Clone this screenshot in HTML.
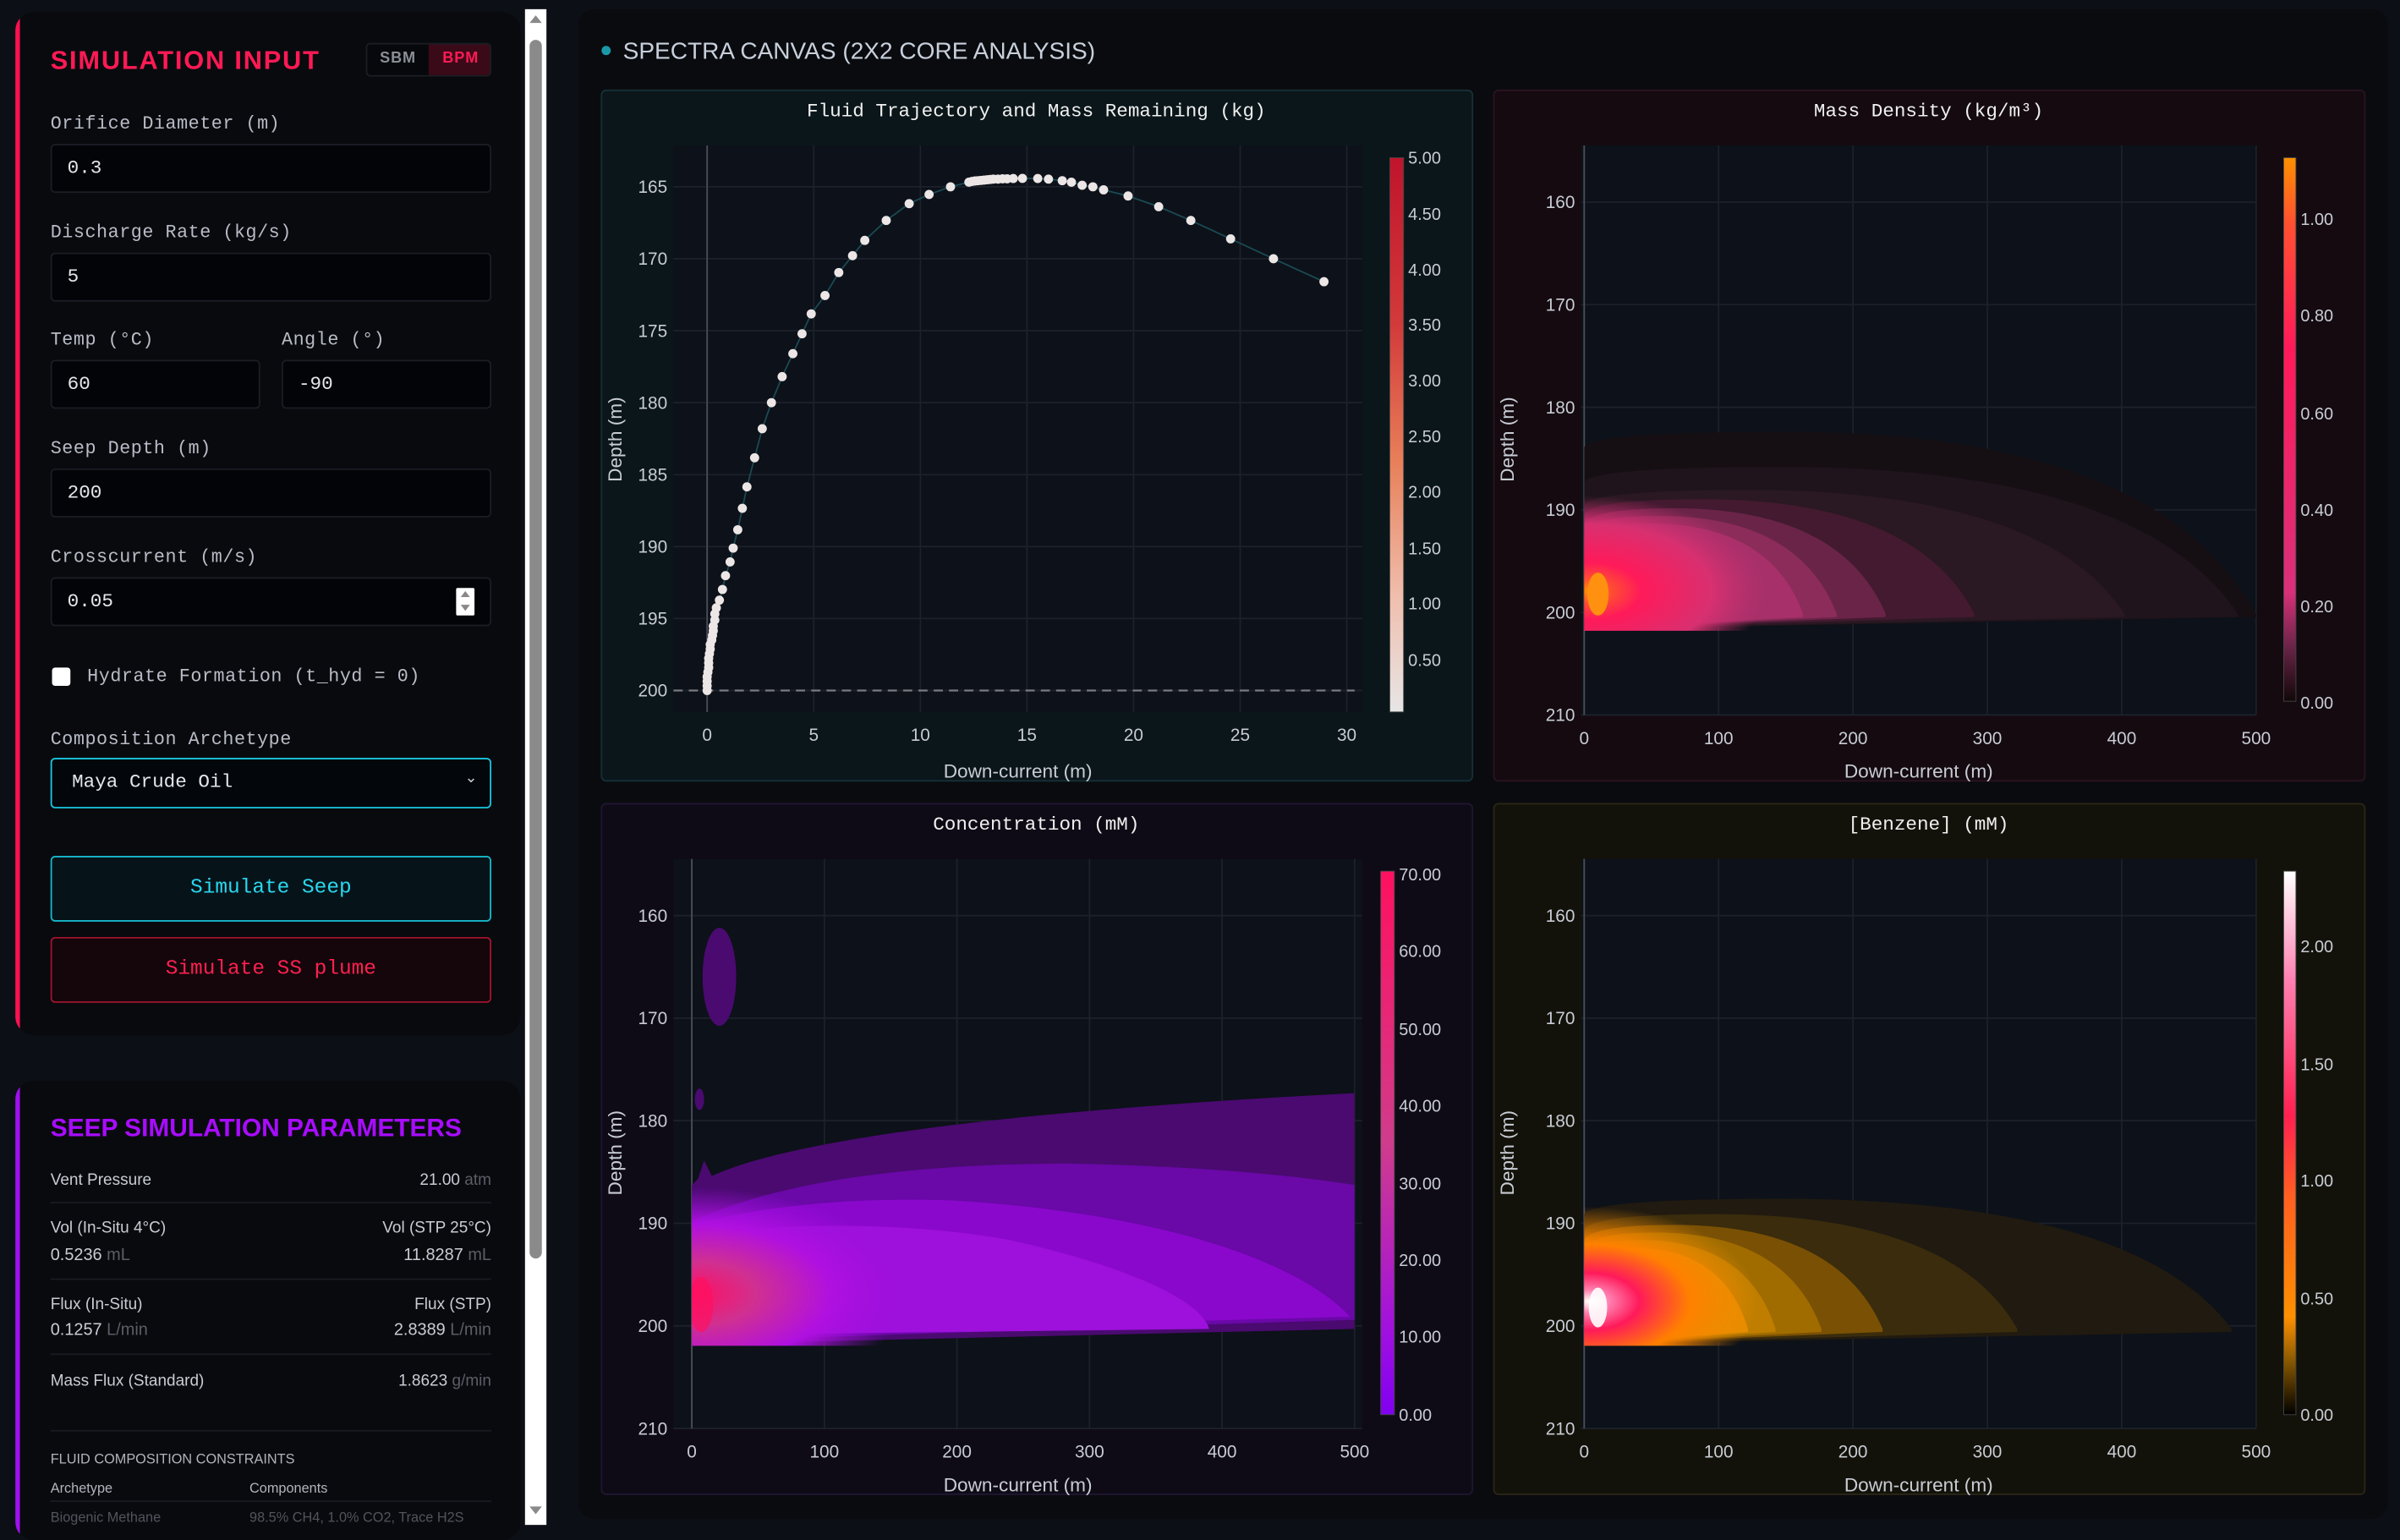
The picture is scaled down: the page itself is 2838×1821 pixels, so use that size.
<!DOCTYPE html>
<html><head><meta charset="utf-8">
<style>
*{box-sizing:border-box;margin:0;padding:0}
html,body{width:2838px;height:1814px;overflow:hidden;background:#0c0f16}
#w{position:absolute;left:0;top:0;width:1568px;height:1002px;transform:scale(1.80995,1.8104);transform-origin:0 0;background:#0c0f16;font-family:"Liberation Mono",monospace;color:#c8ccd4}
.card{position:absolute;background:#090a0e;border-radius:12px;overflow:hidden}
.card:before{content:"";position:absolute;left:0;top:0;bottom:0;width:3px;border-radius:12px 0 0 12px}
.c1:before{background:#ff1050}.c2:before{background:#a010f0}
.ab{position:absolute}
.lbl{position:absolute;left:23px;font-size:12px;color:#b8bcc6;letter-spacing:.3px}
.inp{position:absolute;left:23px;width:288px;height:32px;background:#030407;border:1px solid #1a1d24;border-radius:3px;font-size:12.5px;color:#e4e6ea;padding:8px 10px}
.row{position:absolute;left:23px;width:288px;font-size:10.5px;color:#c8ccd4}
.u{color:#5a5e66}
.hr{position:absolute;left:23px;width:288px;height:1px;background:#181b22}
</style></head><body>
<div id="w">
<div class="card c1" style="left:10px;top:8px;width:330px;height:668px">
  <div class="ab" style="left:23px;top:22px;font-family:'Liberation Sans',sans-serif;font-weight:bold;font-size:17px;color:#ff1a55;letter-spacing:1px">SIMULATION INPUT</div>
  <div class="ab" style="left:229px;top:20px;width:82px;height:22px;border:1px solid #1c1e24;border-radius:3px;overflow:hidden;font-family:'Liberation Sans',sans-serif;font-weight:bold;font-size:10px;letter-spacing:.5px">
    <div class="ab" style="left:0;top:0;width:40px;height:22px;background:#07080b;color:#8a8e96;text-align:center;line-height:20px">SBM</div>
    <div class="ab" style="left:40px;top:0;width:42px;height:22px;background:#3a0a18;color:#ff1a55;text-align:center;line-height:20px">BPM</div>
  </div>
  <div class="lbl" style="top:66px">Orifice Diameter (m)</div>
  <div class="inp" style="top:86px">0.3</div>
  <div class="lbl" style="top:137px">Discharge Rate (kg/s)</div>
  <div class="inp" style="top:157px">5</div>
  <div class="lbl" style="top:207px">Temp (°C)</div>
  <div class="lbl" style="top:207px;left:174px">Angle (°)</div>
  <div class="inp" style="top:227px;width:137px">60</div>
  <div class="inp" style="top:227px;left:174px;width:137px">-90</div>
  <div class="lbl" style="top:278px">Seep Depth (m)</div>
  <div class="inp" style="top:298px">200</div>
  <div class="lbl" style="top:349px">Crosscurrent (m/s)</div>
  <div class="inp" style="top:369px">0.05<div class="ab" style="left:264px;top:6px;width:12px;height:18px;background:#fff;border-radius:1px"><div class="ab" style="left:3px;top:2px;border:3px solid transparent;border-bottom:4px solid #888;border-top:0"></div><div class="ab" style="left:3px;top:11px;border:3px solid transparent;border-top:4px solid #888;border-bottom:0"></div></div></div>
  <div class="ab" style="left:24px;top:428px;width:12px;height:12px;background:#fff;border-radius:2px"></div>
  <div class="lbl" style="top:427px;left:47px">Hydrate Formation (t_hyd = 0)</div>
  <div class="lbl" style="top:468px">Composition Archetype</div>
  <div class="inp" style="top:487px;height:33px;border:1.5px solid #18c8e0;background:#03070c;padding:8px 13px">Maya Crude Oil<span class="ab" style="right:8px;top:7px;font-size:10px;color:#ccc">&#8964;</span></div>
  <div class="ab" style="left:23px;top:551px;width:288px;height:43px;border:1px solid #16b8cc;background:#06141a;border-radius:3px;color:#2ad8ee;font-size:13.5px;text-align:center;line-height:41px">Simulate Seep</div>
  <div class="ab" style="left:23px;top:604px;width:288px;height:43px;border:1px solid #a0142e;background:#14060b;border-radius:3px;color:#ff2050;font-size:13.5px;text-align:center;line-height:41px">Simulate SS plume</div>
</div>
<div class="card c2" style="left:10px;top:706px;width:330px;height:300px;font-family:'Liberation Sans',sans-serif">
  <div class="ab" style="left:23px;top:22px;font-weight:bold;font-size:16.5px;color:#a80cff">SEEP SIMULATION PARAMETERS</div>
  <div class="row" style="top:59px">Vent Pressure<span style="float:right">21.00 <span class="u">atm</span></span></div>
  <div class="hr" style="top:79px"></div>
  <div class="row" style="top:90px">Vol (In-Situ 4°C)<span style="float:right">Vol (STP 25°C)</span></div>
  <div class="row" style="top:108px;font-size:11px">0.5236 <span class="u">mL</span><span style="float:right">11.8287 <span class="u">mL</span></span></div>
  <div class="hr" style="top:129px"></div>
  <div class="row" style="top:140px">Flux (In-Situ)<span style="float:right">Flux (STP)</span></div>
  <div class="row" style="top:157px;font-size:11px">0.1257 <span class="u">L/min</span><span style="float:right">2.8389 <span class="u">L/min</span></span></div>
  <div class="hr" style="top:178px"></div>
  <div class="row" style="top:190px">Mass Flux (Standard)<span style="float:right">1.8623 <span class="u">g/min</span></span></div>
  <div class="hr" style="top:228px"></div>
  <div class="row" style="top:242px;font-size:9px;color:#b0b4bc">FLUID COMPOSITION CONSTRAINTS</div>
  <div class="row" style="top:261px;font-size:9px;color:#b0b4bc">Archetype<span class="ab" style="left:130px">Components</span></div>
  <div class="hr" style="top:274px"></div>
  <div class="row" style="top:280px;font-size:9px;color:#50545c">Biogenic Methane<span class="ab" style="left:130px">98.5% CH4, 1.0% CO2, Trace H2S</span></div>
</div>
<div class="ab" style="left:343px;top:6px;width:14px;height:990px;background:#fff"></div>
<div class="ab" style="left:346px;top:26px;width:8px;height:796px;background:#8a8a8a;border-radius:4px"></div>
<div class="ab" style="left:346px;top:10px;border:4px solid transparent;border-bottom:5px solid #8a8a8a;border-top:0"></div>
<div class="ab" style="left:346px;top:984px;border:4px solid transparent;border-top:5px solid #8a8a8a;border-bottom:0"></div>
<div class="ab" style="left:378px;top:6px;width:1182px;height:986px;background:#0a0b0f;border-radius:10px"></div>
<svg class="ab" style="left:0;top:0" width="1568" height="1002" viewBox="0 0 1568 1002" id="sv" font-family="Liberation Sans, sans-serif">
<defs>
<linearGradient id="g1" x1="0" y1="0" x2="0" y2="1"><stop offset="0" stop-color="#c0142c"/><stop offset=".3" stop-color="#d23a3a"/><stop offset=".55" stop-color="#e8805a"/><stop offset=".8" stop-color="#f0c0b0"/><stop offset="1" stop-color="#e6e6e6"/></linearGradient>
<linearGradient id="g2" x1="0" y1="0" x2="0" y2="1"><stop offset="0" stop-color="#ff9000"/><stop offset=".12" stop-color="#ff5030"/><stop offset=".35" stop-color="#ff1a5a"/><stop offset=".8" stop-color="#d8307a"/><stop offset=".9" stop-color="#6a2448"/><stop offset="1" stop-color="#100808"/></linearGradient>
<linearGradient id="g3" x1="0" y1="0" x2="0" y2="1"><stop offset="0" stop-color="#ff1060"/><stop offset=".5" stop-color="#d03c8c"/><stop offset=".85" stop-color="#a010e0"/><stop offset="1" stop-color="#8000f0"/></linearGradient>
<linearGradient id="g4" x1="0" y1="0" x2="0" y2="1"><stop offset="0" stop-color="#ffffff"/><stop offset=".2" stop-color="#ff80b0"/><stop offset=".45" stop-color="#ff2050"/><stop offset=".6" stop-color="#ff6020"/><stop offset=".82" stop-color="#ff9000"/><stop offset=".9" stop-color="#8a5a00"/><stop offset="1" stop-color="#000"/></linearGradient>
<radialGradient id="r2" cx=".5" cy=".5" r=".5"><stop offset="0" stop-color="#ff9000"/><stop offset=".12" stop-color="#ff5030"/><stop offset=".3" stop-color="#ff1a5a"/><stop offset=".7" stop-color="#d83070"/><stop offset="1" stop-color="#c03070" stop-opacity="0"/></radialGradient>
<radialGradient id="r3" cx=".5" cy=".5" r=".5"><stop offset="0" stop-color="#ff1060"/><stop offset=".3" stop-color="#d03090"/><stop offset=".65" stop-color="#b010e0"/><stop offset="1" stop-color="#a010e0" stop-opacity="0"/></radialGradient>
<radialGradient id="r4" cx=".5" cy=".5" r=".5"><stop offset="0" stop-color="#ffffff"/><stop offset=".12" stop-color="#ff80b0"/><stop offset=".3" stop-color="#ff1a5a"/><stop offset=".6" stop-color="#ff8000"/><stop offset="1" stop-color="#f09000" stop-opacity="0"/></radialGradient>
<clipPath id="cTR"><rect x="1035" y="95" width="440" height="317"/></clipPath>
<clipPath id="cBL"><rect x="452" y="561" width="433" height="318"/></clipPath>
<clipPath id="cBR"><rect x="1035" y="561" width="440" height="318"/></clipPath>
</defs>
<circle cx="396" cy="33" r="3" fill="#1a9aa8"/>
<text x="407" y="38.5" font-size="15.5" fill="#c8d0dc">SPECTRA CANVAS (2X2 CORE ANALYSIS)</text>
<g id="plots"></g>
</svg>
</div>
<script>
var NS="http://www.w3.org/2000/svg",G=document.getElementById('plots');
function el(t,a,txt,p){var e=document.createElementNS(NS,t);for(var k in a)e.setAttribute(k,a[k]);if(txt!=null)e.textContent=txt;(p||G).appendChild(e);return e;}
function plot(c){
 el('rect',{x:c.px,y:c.py,width:569,height:451,rx:3,fill:c.bg,stroke:c.bd,'stroke-width':1});
 el('text',{x:c.px+284,y:c.py+17,'text-anchor':'middle','font-size':12.5,fill:'#f0f0f0','font-family':'Liberation Mono, monospace'},c.title);
 el('rect',{x:c.ax,y:c.ay,width:c.aw,height:c.ah,fill:'#0d1119'});
 c.xt.forEach(function(v){var x=c.fx(v);el('line',{x1:x,y1:c.ay,x2:x,y2:c.ay+c.ah,stroke:'#1c212a','stroke-width':1});el('text',{x:x,y:c.ay+c.ah+19,'text-anchor':'middle','font-size':11.5,fill:'#c8ccd4'},v);});
 c.yt.forEach(function(v){var y=c.fy(v);el('line',{x1:c.ax,y1:y,x2:c.ax+c.aw,y2:y,stroke:'#1c212a','stroke-width':1});el('text',{x:c.ax-4,y:y+4,'text-anchor':'end','font-size':11.5,fill:'#c8ccd4'},v);});
 el('line',{x1:c.fx(0),y1:c.ay,x2:c.fx(0),y2:c.ay+c.ah,stroke:'#4a4e56','stroke-width':1});
 el('text',{x:c.ax+c.aw/2,y:c.py+449,'text-anchor':'middle','font-size':12.5,fill:'#c8ccd4'},'Down-current (m)');
 var yx=c.px+13,yy=c.py+228;el('text',{x:yx,y:yy,'text-anchor':'middle','font-size':12.5,fill:'#c8ccd4',transform:'rotate(-90 '+yx+' '+yy+')'},'Depth (m)');
 el('rect',{x:c.cx,y:c.cy,width:c.cw,height:c.ch,fill:'url(#'+c.g+')',stroke:'#444','stroke-width':.5});
 c.cl.forEach(function(l){el('text',{x:c.cx+c.cw+3,y:l[1]+4,'font-size':11,fill:'#c8ccd4'},l[0]);});
}
var tl={px:393,py:59,bg:'#0b161a',bd:'#153038',title:'Fluid Trajectory and Mass Remaining (kg)',ax:440,ay:95,aw:450,ah:370,
 fx:function(v){return 462+v*13.93},fy:function(v){return 122+(v-165)*9.4},xt:[0,5,10,15,20,25,30],yt:[165,170,175,180,185,190,195,200],
 cx:908,cy:103,cw:9,ch:362,g:'g1',cl:[['5.00',103],['4.50',139.5],['4.00',176],['3.50',212],['3.00',248.5],['2.50',285],['2.00',321],['1.50',358],['1.00',394],['0.50',431]]};
plot(tl);
el('line',{x1:440,y1:451,x2:885,y2:451,stroke:'#7a7a80','stroke-width':1.2,'stroke-dasharray':'6 4'});
var pts=[[462,451],[462,448],[462,445],[462,442],[462.5,439],[463,436],[463,433],[463,430],[463.5,427],[464,424],[464,421],[465,418],[465.5,415],[466,412],[466,409],[467,405],[467,401],[468,397],[470,392],[472,385],[474,376],[477,367],[479,358],[482,346],[485,332],[488,318],[493,299],[498,280],[504,263],[511,246],[518,231],[524,218],[530,205],[539,193],[548,178],[557,167],[565,157],[579,144],[594,133],[607,127],[621,122],[633,119],[635,118.5],[637,118.2],[639,118],[641,117.8],[643,117.6],[645,117.4],[647,117.2],[649,117],[652,117],[655,116.8],[658,116.8],[662,116.6],[668,116.5],[678,116.6],[685,117],[694,118],[700,119],[707,121],[714,122],[721,124],[737,128],[757,135],[778,144],[804,156],[832,169],[865,184]];
el('path',{d:'M'+pts.map(function(p){return p.join(',')}).join(' L'),fill:'none',stroke:'#1a4a52','stroke-width':1});
pts.forEach(function(p){el('circle',{cx:p[0],cy:p[1],r:3,fill:'#ece6e6'});});
function plume(x0,by,layers,clip){
 var g=el('g',{'clip-path':'url(#'+clip+')'});
 layers.forEach(function(l){var L=l[0]-x0,t=l[1];
  el('path',{d:'M'+x0+','+(by+1)+' L'+x0+','+(t+10)+' Q'+(x0+6)+','+t+' '+(x0+L*0.3)+','+t+' Q'+(x0+L*0.85)+','+t+' '+(x0+L)+','+(by-9)+' L'+(x0+L)+','+(by-7)+' Z',fill:l[2]},null,g);});
 return g;
}
var tr={px:976,py:59,bg:'#140a10',bd:'#2a1420',title:'Mass Density (kg/m\u00b3)',ax:1033,ay:95,aw:441,ah:372,
 fx:function(v){return 1035+v*0.878},fy:function(v){return 132+(v-160)*6.7},xt:[0,100,200,300,400,500],yt:[160,170,180,190,200,210],
 cx:1492,cy:103,cw:8,ch:355,g:'g2',cl:[['1.00',143],['0.80',206],['0.60',270],['0.40',333],['0.20',396],['0.00',459]]};
plot(tr);
var g=plume(1035,410,[[1474,282,'#150f14'],[1462,305,'#1f141c'],[1388,320,'#2a1822'],[1290,326,'#431a30'],[1232,332,'#6a2448'],[1200,337,'#8c2c5a'],[1178,342,'#a8306a']],'cTR');
el('ellipse',{cx:1038,cy:386,rx:115,ry:62,fill:'url(#r2)'},null,g);
el('ellipse',{cx:1044,cy:388,rx:7,ry:14,fill:'#ff9010'},null,g);
var bl={px:393,py:525,bg:'#0f0b16',bd:'#201632',title:'Concentration (mM)',ax:440,ay:561,aw:450,ah:372,
 fx:function(v){return 452+v*0.866},fy:function(v){return 598+(v-160)*6.7},xt:[0,100,200,300,400,500],yt:[160,170,180,190,200,210],
 cx:902,cy:569,cw:9,ch:355,g:'g3',cl:[['70.00',571],['60.00',621],['50.00',672],['40.00',722],['30.00',773],['20.00',823],['10.00',873],['0.00',924]]};
plot(bl);
var gb=el('g',{'clip-path':'url(#cBL)'});
el('path',{d:'M452,878 L452,774 L456,770 L460,758 L465,768 L470,766 C520,745 650,726 885,714 L885,868 Z',fill:'#4a0a70'},null,gb);
el('path',{d:'M452,876 L452,798 C500,775 580,760 700,760 C800,762 860,770 885,774 L885,862 Z',fill:'#6a08a8'},null,gb);
el('path',{d:'M452,874 L452,800 C500,787 560,782 620,784 C760,792 850,825 882,860 L452,872 Z',fill:'#8a08cc'},null,gb);
el('path',{d:'M452,872 L452,808 C520,797 600,799 660,810 C740,828 785,850 790,868 Z',fill:'#9e10dc'},null,gb);
el('ellipse',{cx:452,cy:845,rx:140,ry:70,fill:'url(#r3)'},null,gb);
el('ellipse',{cx:458,cy:852,rx:8,ry:18,fill:'#ff1060','opacity':.7},null,gb);
el('ellipse',{cx:470,cy:638,rx:11,ry:32,fill:'#4a0a70'});
el('ellipse',{cx:457,cy:718,rx:3,ry:7,fill:'#4a0a70'});
var br={px:976,py:525,bg:'#13120a',bd:'#2a2614',title:'[Benzene] (mM)',ax:1033,ay:561,aw:441,ah:372,
 fx:function(v){return 1035+v*0.878},fy:function(v){return 598+(v-160)*6.7},xt:[0,100,200,300,400,500],yt:[160,170,180,190,200,210],
 cx:1492,cy:569,cw:8,ch:355,g:'g4',cl:[['2.00',618],['1.50',695],['1.00',771],['0.50',848],['0.00',924]]};
plot(br);
var g4=plume(1035,877,[[1458,783,'#201a10'],[1318,793,'#3a2c0c'],[1230,800,'#7a5004'],[1190,805,'#a06c00'],[1160,810,'#c07e00'],[1142,815,'#e88c00']],'cBR');
el('ellipse',{cx:1038,cy:850,rx:110,ry:62,fill:'url(#r4)'},null,g4);
el('ellipse',{cx:1044,cy:854,rx:6,ry:13,fill:'#fff','opacity':.9},null,g4);
</script>
</body></html>
